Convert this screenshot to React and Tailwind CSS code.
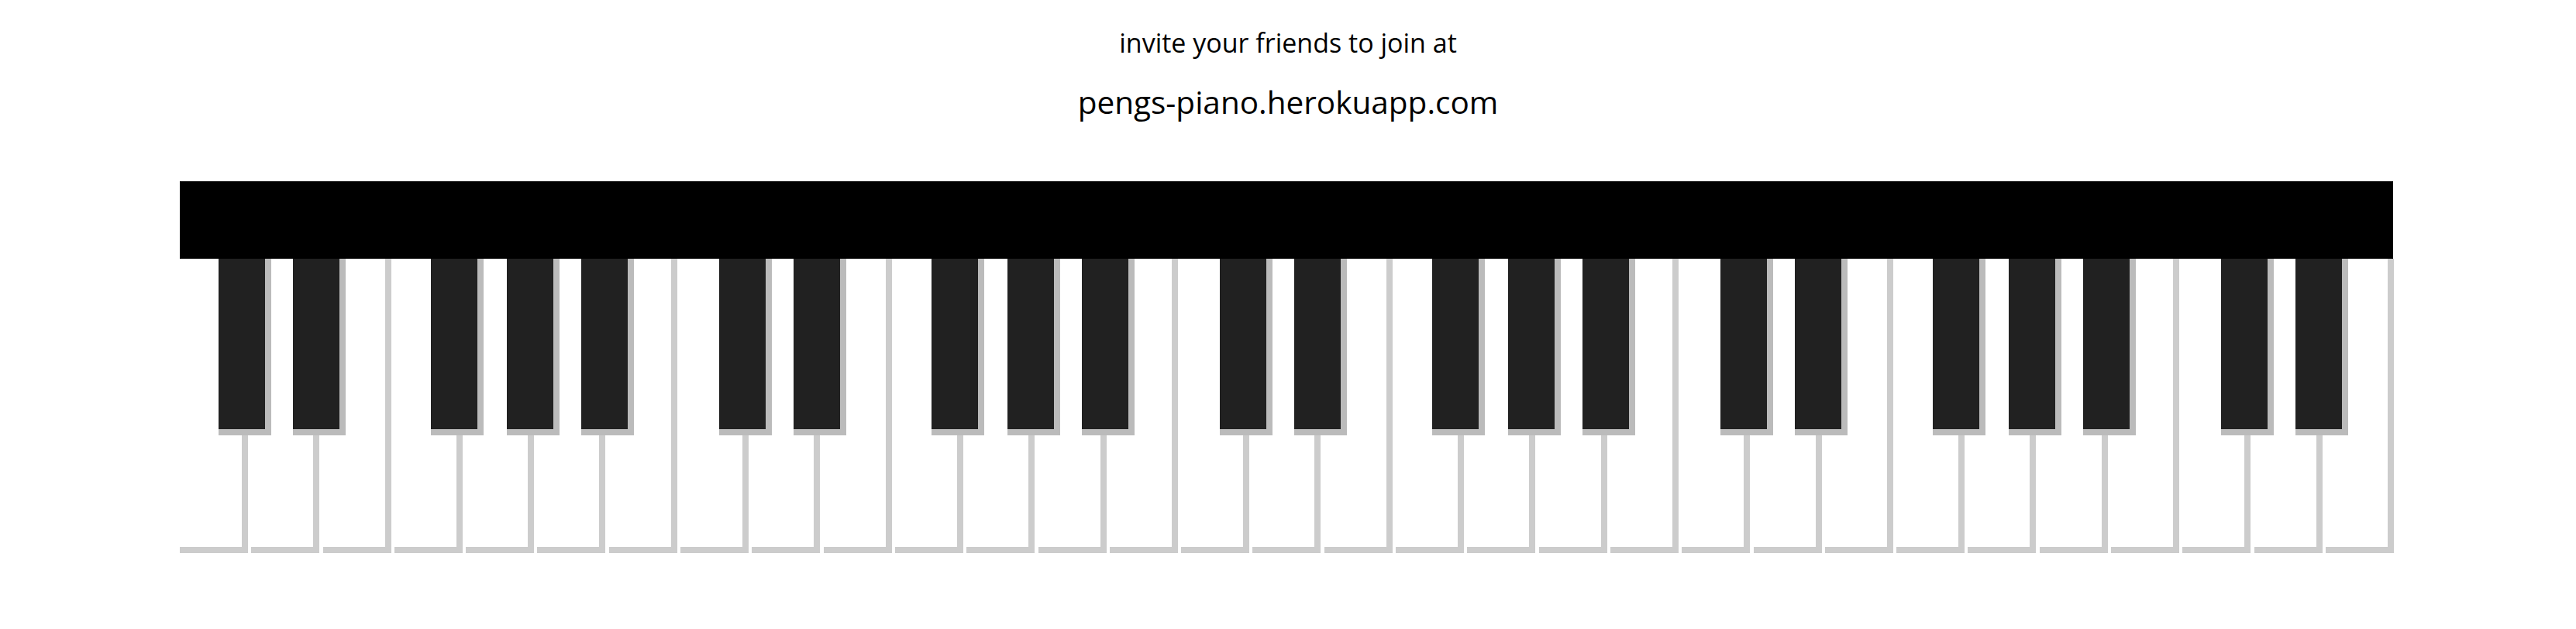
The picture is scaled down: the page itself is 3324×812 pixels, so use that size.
import React from 'react';

const WHITE_COUNT = 31;
// black keys per octave, with the space that follows each one
const octave = ['mr-[28px]', 'mr-[110px]', 'mr-[30px]', 'mr-[28px]', 'mr-[110px]'];
const blackKeys = [...octave, ...octave, ...octave, ...octave, 'mr-[28px]', 'mr-0'];

const WhiteKey = () => (
  <div className="w-[88px] h-full shrink-0 bg-white border-r-8 border-b-8 border-[#cccccc]"></div>
);

const BlackKey = ({ gap }) => (
  <div className={`w-[68px] h-[228px] shrink-0 bg-[#212121] border-r-8 border-b-8 border-[#bbbbbb] ${gap}`}></div>
);

const App = () => {
  return (
    <div className="min-h-screen w-full bg-white flex flex-col items-center font-['Open_Sans',sans-serif] text-black">
      <p className="mt-[38px] text-[34px] leading-none">invite your friends to join at</p>
      <p className="mt-[40px] text-[40.5px] leading-none font-medium">pengs-piano.herokuapp.com</p>

      <div className="mt-[81px] w-[2860px]">
        <div className="w-[2856px] h-[100px] bg-black"></div>
        <div className="relative h-[380px] flex gap-[4.3px]">
          {Array.from({ length: WHITE_COUNT }).map((_, i) => (
            <WhiteKey key={i} />
          ))}
          <div className="absolute inset-0 flex items-start pl-[50px]">
            {blackKeys.map((gap, i) => (
              <BlackKey key={i} gap={gap} />
            ))}
          </div>
        </div>
      </div>
    </div>
  );
};

export default App;
